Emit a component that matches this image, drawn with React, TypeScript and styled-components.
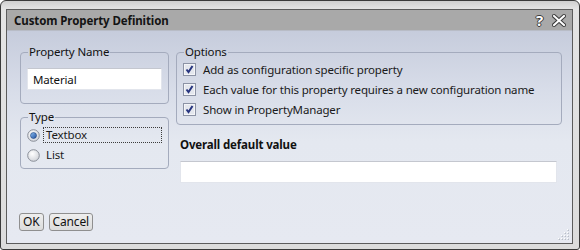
import styled, { createGlobalStyle } from 'styled-components';

const GlobalStyle = createGlobalStyle`
  html, body {
    margin: 0;
    padding: 0;
    background: #ffffff;
  }
  body {
    font-family: "Noto Sans", "Open Sans", sans-serif;
    font-size: 11.5px;
    letter-spacing: -0.15px;
    color: #1a1a1a;
  }
`;

const Window = styled.div`
  box-sizing: border-box;
  width: 580px;
  height: 250px;
  border: 1px solid #3a3a3a;
  border-radius: 6px 6px 3px 3px;
  background: linear-gradient(to bottom, #cfcfcf 0, #e4e4e4 8px, #dcdcdc 100%);
  padding: 8px 6px 5px 5px;
  display: flex;
`;

const Frame = styled.div`
  flex: 1;
  display: flex;
  flex-direction: column;
  border: 1px solid #5c5c5c;
  min-width: 0;
`;

const TitleBar = styled.div`
  height: 20px;
  background: #a9a9a9;
  display: flex;
  align-items: center;
  padding: 0 6px 0 7px;
  border-bottom: 1px solid #b8bcc6;
`;

const Title = styled.div`
  flex: 1;
  font-weight: bold;
  font-size: 11.5px;
  color: #141414;
  letter-spacing: -0.1px;
`;

const TitleButtons = styled.div`
  display: flex;
  align-items: center;
  gap: 9px;
`;

const Help = styled.span`
  font-weight: bold;
  font-size: 15px;
  line-height: 1;
  color: #ffffff;
  text-shadow: 1px 0 0 #3a3a3a, -1px 0 0 #3a3a3a, 0 1px 0 #3a3a3a, 0 -1px 0 #3a3a3a;
`;

const Body = styled.div`
  flex: 1;
  position: relative;
  display: flex;
  flex-direction: column;
  padding: 14px 11px 12px 13px;
  background: linear-gradient(to bottom, #c6ccdc 0, #d8dde9 60px, #e4e8f0 110px, #e6e9f1 100%);
`;

const Main = styled.div`
  display: grid;
  grid-template-columns: 149px 386px;
  column-gap: 7px;
  align-items: start;
`;

const Column = styled.div<{ $gap: number }>`
  display: flex;
  flex-direction: column;
  gap: ${(p) => p.$gap}px;
`;

const Group = styled.fieldset<{ $pad: string }>`
  margin: 0;
  padding: ${(p) => p.$pad};
  border: 1px solid #a4abbd;
  border-radius: 4px;
  min-width: 0;
`;

const Legend = styled.legend`
  padding: 0 1px;
  margin-left: 1px;
  line-height: 14px;
  color: #111;
`;

const TextBox = styled.div<{ $width?: string }>`
  box-sizing: border-box;
  height: 22px;
  width: ${(p) => p.$width || '100%'};
  background: #ffffff;
  border: 1px solid #e2e5ec;
  border-top: 1px solid #c4c7cf;
  padding: 0 5px;
  display: flex;
  align-items: center;
  color: #111;
`;

const OptionRow = styled.div`
  display: flex;
  align-items: center;
  height: 20px;
  gap: 3px;
`;

const OptionLabel = styled.span<{ $focused?: boolean }>`
  flex: 1;
  padding: 0 2px;
  line-height: 14px;
  border: 1px dotted ${(p) => (p.$focused ? '#3c3c3c' : 'transparent')};
`;

const CheckRow = styled.div`
  display: flex;
  align-items: center;
  height: 20px;
  gap: 7px;
  white-space: nowrap;
`;

const BoldLabel = styled.div`
  font-weight: bold;
  margin: 12px 0 9px 4px;
  color: #111;
`;

const Spacer = styled.div`
  flex: 1;
`;

const ButtonRow = styled.div`
  display: flex;
  gap: 5px;
  margin-left: -1px;
`;

const Button = styled.button`
  box-sizing: border-box;
  height: 18px;
  padding: 0 3px;
  font-family: inherit;
  font-size: 12px;
  letter-spacing: -0.15px;
  line-height: 14px;
  color: #111;
  background: linear-gradient(to bottom, #eeeeee, #dcdcdc);
  border: 1px solid #8f8f8f;
  border-radius: 3px;
`;

const Grip = styled.svg`
  position: absolute;
  right: 3px;
  bottom: 3px;
`;

const Radio = ({ checked }: { checked?: boolean }) => (
  <svg width="13" height="13" viewBox="0 0 13 13">
    <defs>
      <radialGradient id="rgOff" cx="0.4" cy="0.35" r="0.7">
        <stop offset="0" stopColor="#ffffff" />
        <stop offset="1" stopColor="#cfd2d8" />
      </radialGradient>
      <linearGradient id="rgOn" x1="0" y1="0" x2="1" y2="1">
        <stop offset="0" stopColor="#8fc0f2" />
        <stop offset="1" stopColor="#1e4e9e" />
      </linearGradient>
    </defs>
    <circle cx="6.5" cy="6.5" r="5.8" fill="url(#rgOff)" stroke="#8a8f99" strokeWidth="1" />
    {checked ? <circle cx="6.5" cy="6.5" r="3" fill="url(#rgOn)" stroke="#1c3f7a" strokeWidth="0.6" /> : null}
  </svg>
);

const Check = () => (
  <svg width="13" height="13" viewBox="0 0 13 13">
    <rect x="0.5" y="0.5" width="12" height="12" fill="#f4f5f8" stroke="#8c93a5" />
    <rect x="2" y="2" width="9" height="9" fill="#e4e7ee" />
    <path d="M3.5 6.5 L5.5 9 L9.5 3" fill="none" stroke="#27357f" strokeWidth="2" />
  </svg>
);

const CloseIcon = () => (
  <svg width="14" height="13" viewBox="0 0 14 13">
    <path d="M2 2 L12 11 M12 2 L2 11" stroke="#3a3a3a" strokeWidth="4" strokeLinecap="square" />
    <path d="M2 2 L12 11 M12 2 L2 11" stroke="#ffffff" strokeWidth="2" strokeLinecap="square" />
  </svg>
);

const gripDots = [
  [10, 1], [10, 4], [7, 4], [10, 7], [7, 7], [4, 7], [10, 10], [7, 10], [4, 10], [1, 10],
];

const options = [
  'Add as configuration specific property',
  'Each value for this property requires a new configuration name',
  'Show in PropertyManager',
];

export default function App() {
  return (
    <>
      <GlobalStyle />
      <Window>
        <Frame>
          <TitleBar>
            <Title>Custom Property Definition</Title>
            <TitleButtons>
              <Help>?</Help>
              <CloseIcon />
            </TitleButtons>
          </TitleBar>
          <Body>
            <Main>
              <Column $gap={6}>
                <Group $pad="0 6px 13px 6px">
                  <Legend>Property Name</Legend>
                  <TextBox style={{ marginTop: 9 }}>Material</TextBox>
                </Group>
                <Group $pad="1px 6px 3px 6px">
                  <Legend>Type</Legend>
                  <OptionRow>
                    <Radio checked />
                    <OptionLabel $focused>Textbox</OptionLabel>
                  </OptionRow>
                  <OptionRow>
                    <Radio />
                    <OptionLabel>List</OptionLabel>
                  </OptionRow>
                </Group>
              </Column>
              <Column $gap={0}>
                <Group $pad="0 6px 5px 6px">
                  <Legend>Options</Legend>
                  {options.map((o) => (
                    <CheckRow key={o}>
                      <Check />
                      <span>{o}</span>
                    </CheckRow>
                  ))}
                </Group>
                <BoldLabel>Overall default value</BoldLabel>
                <TextBox $width="377px" style={{ marginLeft: 4 }} />
              </Column>
            </Main>
            <Spacer />
            <ButtonRow>
              <Button>OK</Button>
              <Button>Cancel</Button>
            </ButtonRow>
            <Grip width="12" height="12" viewBox="0 0 12 12">
              {gripDots.map(([x, y]) => (
                <g key={`${x}-${y}`}>
                  <rect x={x + 0.6} y={y + 0.6} width="1.2" height="1.2" fill="#9aa0ad" />
                  <rect x={x} y={y} width="1.2" height="1.2" fill="#ffffff" />
                </g>
              ))}
            </Grip>
          </Body>
        </Frame>
      </Window>
    </>
  );
}
